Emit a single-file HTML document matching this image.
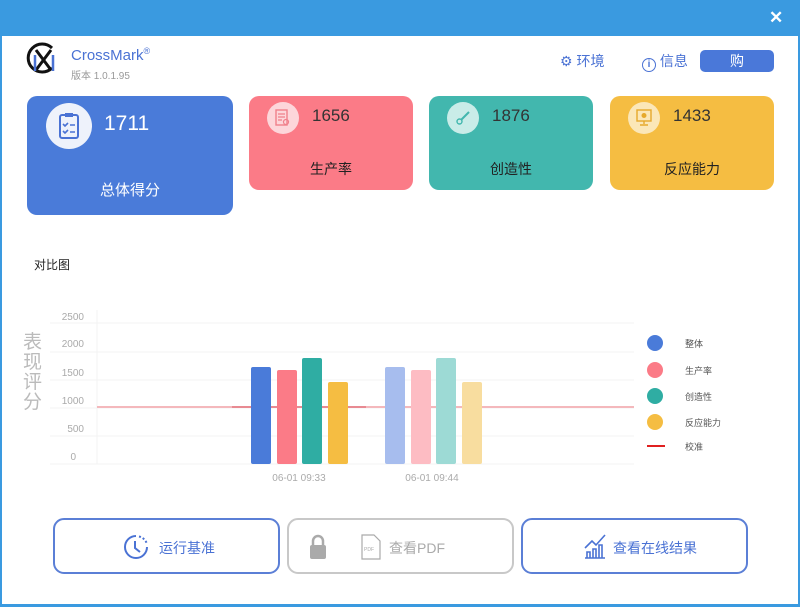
<!DOCTYPE html>
<html><head><meta charset="utf-8"><style>
*{margin:0;padding:0;box-sizing:border-box}
body{width:800px;height:607px;background:#fff;position:relative;overflow:hidden;font-family:"Liberation Sans","Noto Sans CJK SC",sans-serif}
.abs{position:absolute}
.card{position:absolute;border-radius:10px}
.ic{position:absolute;border-radius:50%}
.btn{position:absolute;top:518px;height:56px;width:227px;border:2px solid #5b7fd6;border-radius:11px;font-size:14px;color:#4a72d4}
</style></head><body>
<div class="abs" style="left:0;top:0;width:800px;height:36px;background:#3a9ae0"></div>
<div class="abs" style="left:0;top:36px;width:2px;height:571px;background:#3a9ae0"></div>
<div class="abs" style="right:0;top:36px;width:2px;height:571px;background:#3a9ae0"></div>
<div class="abs" style="left:0;top:604px;width:800px;height:3px;background:#3a9ae0"></div>
<div class="abs" style="left:769px;top:8px;color:#fff;font-size:17px;font-weight:bold">✕</div>

<svg class="abs" style="left:25px;top:40px" width="34" height="36" viewBox="0 0 34 36">
<path d="M27 8 A14 14 0 1 0 27 28" fill="none" stroke="#111" stroke-width="3"/>
<path d="M11 10 L26 30 M26 10 L11 30" stroke="#111" stroke-width="3"/>
<path d="M10 15 V31 M28 15 V31" stroke="#4a72d4" stroke-width="2.5"/>
</svg>
<div class="abs" style="left:71px;top:46px;color:#4a72d4;font-size:15px">CrossMark<sup style="font-size:9px">®</sup></div>
<div class="abs" style="left:71px;top:67px;color:#999;font-size:10px">版本 1.0.1.95</div>

<div class="abs" style="left:560px;top:51px;color:#4a72d4;font-size:14px">⚙ 环境</div>
<div class="abs" style="left:642px;top:51px;color:#4a72d4;font-size:14px"><span style="display:inline-block;width:14px;height:14px;border:1.5px solid #4a72d4;border-radius:50%;font-size:10px;text-align:center;line-height:11px;font-weight:bold;vertical-align:-1px">i</span> 信息</div>
<div class="abs" style="left:700px;top:50px;width:74px;height:22px;background:#4a78d9;border-radius:5px;color:#fff;font-size:14px;text-align:center;line-height:22px">购</div>

<div class="card" style="left:27px;top:96px;width:206px;height:119px;background:#4a7bd9"></div>
<div class="ic" style="left:46px;top:103px;width:46px;height:46px;background:#eef2fb"></div>
<svg class="abs" style="left:58px;top:112px" width="22" height="28" viewBox="0 0 22 28"><rect x="2" y="3" width="18" height="23" rx="2" fill="none" stroke="#4a72d4" stroke-width="2"/><rect x="7" y="1" width="8" height="4" fill="#4a72d4"/><path d="M5 12l2 2 3-3M5 19l2 2 3-3M12 13h5M12 20h5" stroke="#4a72d4" stroke-width="1.6" fill="none"/></svg>
<div class="abs" style="left:104px;top:112px;color:#fff;font-size:21px">1711</div>
<div class="abs" style="left:27px;top:179px;width:206px;text-align:center;color:#fff;font-size:15px">总体得分</div>

<div class="card" style="left:249px;top:96px;width:164px;height:94px;background:#fb7b87"></div>
<div class="ic" style="left:267px;top:102px;width:32px;height:32px;background:#fdd6da"></div>
<svg class="abs" style="left:275px;top:109px" width="16" height="18" viewBox="0 0 16 18"><rect x="1" y="1" width="11" height="15" fill="none" stroke="#f0808b" stroke-width="1.4"/><path d="M3 5h7M3 8h7M3 11h4" stroke="#f0808b" stroke-width="1.2"/><circle cx="11" cy="13" r="2.5" fill="none" stroke="#f0808b" stroke-width="1.2"/></svg>
<div class="abs" style="left:312px;top:106px;color:#333;font-size:17px">1656</div>
<div class="abs" style="left:249px;top:159px;width:164px;text-align:center;color:#222;font-size:14px">生产率</div>

<div class="card" style="left:429px;top:96px;width:164px;height:94px;background:#42b7ae"></div>
<div class="ic" style="left:447px;top:102px;width:32px;height:32px;background:#c9ece8"></div>
<svg class="abs" style="left:455px;top:110px" width="16" height="16" viewBox="0 0 16 16"><path d="M14 2L6 10" stroke="#42b7ae" stroke-width="2"/><circle cx="4.5" cy="11.5" r="2.5" fill="none" stroke="#42b7ae" stroke-width="1.4"/></svg>
<div class="abs" style="left:492px;top:106px;color:#333;font-size:17px">1876</div>
<div class="abs" style="left:429px;top:159px;width:164px;text-align:center;color:#222;font-size:14px">创造性</div>

<div class="card" style="left:610px;top:96px;width:164px;height:94px;background:#f5bd42"></div>
<div class="ic" style="left:628px;top:102px;width:32px;height:32px;background:#fbe7b8"></div>
<svg class="abs" style="left:636px;top:109px" width="16" height="18" viewBox="0 0 16 18"><rect x="1" y="1" width="14" height="11" fill="none" stroke="#e6a92c" stroke-width="1.4"/><circle cx="8" cy="6.5" r="2.5" fill="#e6a92c"/><path d="M8 12v3M4 16h8" stroke="#e6a92c" stroke-width="1.4"/></svg>
<div class="abs" style="left:673px;top:106px;color:#333;font-size:17px">1433</div>
<div class="abs" style="left:610px;top:159px;width:164px;text-align:center;color:#222;font-size:14px">反应能力</div>

<div class="abs" style="left:34px;top:256px;color:#222;font-size:12px">对比图</div>
<div class="abs" style="left:23px;top:333px;width:20px;color:#bbb;font-size:19px;line-height:20px">表现评分</div>

<svg class="abs" style="left:0;top:300px" width="800" height="190">
<g stroke="#f3f3f3" stroke-width="1"><line x1="50" y1="23" x2="634" y2="23"/><line x1="50" y1="52" x2="634" y2="52"/><line x1="50" y1="80" x2="634" y2="80"/><line x1="50" y1="108" x2="634" y2="108"/><line x1="50" y1="136" x2="634" y2="136"/><line x1="50" y1="164" x2="634" y2="164"/><line x1="97" y1="10" x2="97" y2="164"/></g>
<g font-size="10" fill="#aaa" text-anchor="end" font-family="Liberation Sans"><text x="84" y="20">2500</text><text x="84" y="47">2000</text><text x="84" y="76">1500</text><text x="84" y="104">1000</text><text x="84" y="132">500</text><text x="76" y="160">0</text></g>
<line x1="97" y1="107" x2="634" y2="107" stroke="#f4b8bc" stroke-width="2"/>
<line x1="232" y1="107" x2="366" y2="107" stroke="#e88a92" stroke-width="2"/>
<rect x="251" y="67" width="20" height="97" rx="2" fill="#4a7bd9"/>
<rect x="277" y="70" width="20" height="94" rx="2" fill="#fb7b87"/>
<rect x="302" y="58" width="20" height="106" rx="2" fill="#2fada3"/>
<rect x="328" y="82" width="20" height="82" rx="2" fill="#f5bd42"/>
<rect x="385" y="67" width="20" height="97" rx="2" fill="#a7bdee"/>
<rect x="411" y="70" width="20" height="94" rx="2" fill="#fdbcc3"/>
<rect x="436" y="58" width="20" height="106" rx="2" fill="#9ddad5"/>
<rect x="462" y="82" width="20" height="82" rx="2" fill="#f8dd9f"/>
<g font-size="10" fill="#aaa" text-anchor="middle" font-family="Liberation Sans"><text x="299" y="181">06-01 09:33</text><text x="432" y="181">06-01 09:44</text></g>
<circle cx="655" cy="43" r="8" fill="#4a7bd9"/><circle cx="655" cy="70" r="8" fill="#fb7b87"/><circle cx="655" cy="96" r="8" fill="#2fada3"/><circle cx="655" cy="122" r="8" fill="#f5bd42"/>
<line x1="647" y1="146" x2="665" y2="146" stroke="#e02020" stroke-width="2"/>
<g font-size="9" fill="#555" font-family="Liberation Sans, Noto Sans CJK SC"><text x="685" y="47">整体</text><text x="685" y="74">生产率</text><text x="685" y="100">创造性</text><text x="685" y="126">反应能力</text><text x="685" y="150">校准</text></g>
</svg>

<div class="btn" style="left:53px"><svg class="abs" style="left:68px;top:14px" width="26" height="26" viewBox="0 0 26 26"><path d="M13 2 A11 11 0 1 0 24 13" fill="none" stroke="#4a72d4" stroke-width="2"/><path d="M16 2.5 A11 11 0 0 1 24 10" fill="none" stroke="#4a72d4" stroke-width="2" stroke-dasharray="2 2"/><path d="M12 7v7l5 4" fill="none" stroke="#4a72d4" stroke-width="2"/></svg><span class="abs" style="left:104px;top:18px">运行基准</span></div>
<div class="btn" style="left:287px;border-color:#c8c8c8;color:#aaa"><svg class="abs" style="left:20px;top:14px" width="18" height="26" viewBox="0 0 18 26"><path d="M4 11V7a5 5 0 0 1 10 0v4" fill="none" stroke="#aaa" stroke-width="2.5"/><rect x="1" y="11" width="16" height="14" rx="2" fill="#aaa"/></svg><svg class="abs" style="left:72px;top:14px" width="20" height="26" viewBox="0 0 20 26"><path d="M1 1h12l6 6v18H1z" fill="none" stroke="#aaa" stroke-width="1.2"/><text x="3" y="17" font-size="5" fill="#aaa">PDF</text></svg><span class="abs" style="left:100px;top:18px">查看PDF</span></div>
<div class="btn" style="left:521px"><svg class="abs" style="left:60px;top:12px" width="24" height="28" viewBox="0 0 24 28"><path d="M2 26h20M4 26v-6h3v6M10 26v-9h3v9M16 26v-13h3v13M2 16l7-7 4 4 9-10" fill="none" stroke="#4a72d4" stroke-width="1.6"/></svg><span class="abs" style="left:90px;top:18px">查看在线结果</span></div>
</body></html>
